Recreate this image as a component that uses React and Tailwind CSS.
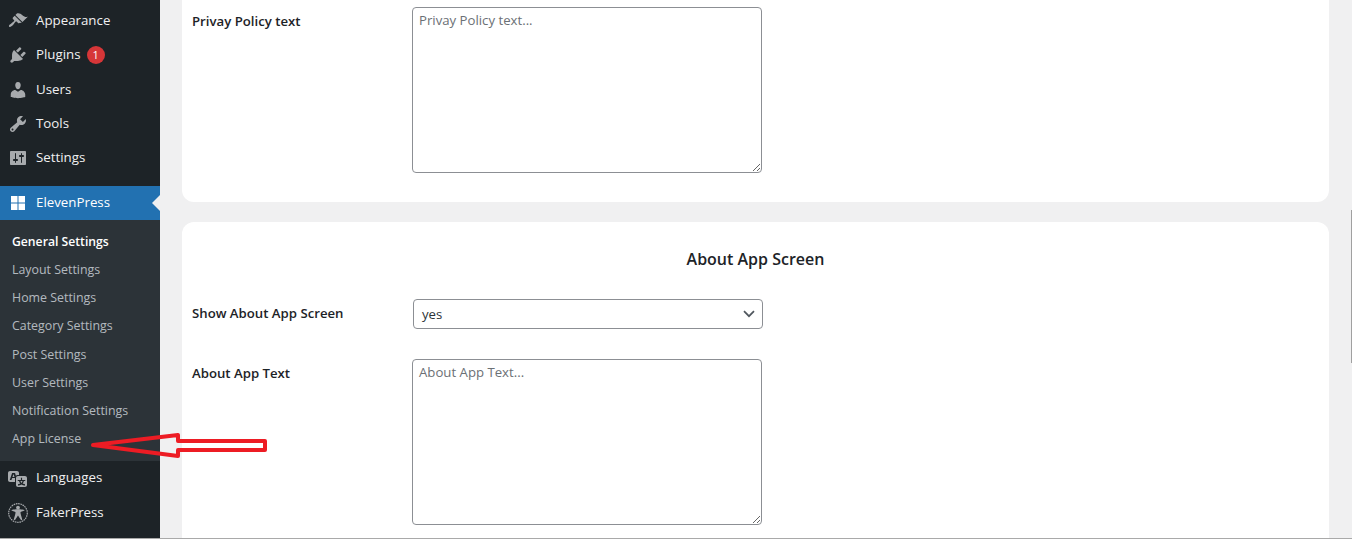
const FONT = "font-['Open_Sans','Noto_Sans',sans-serif]";

const P = {
  appearance: "M14.48 11.06L7.41 3.99l1.5-1.5c.5-.56 2.3-.47 3.51.32 1.21.8 1.43 1.28 2.91 2.1 1.18.64 2.45 1.26 4.45.85zm-.71.71L6.7 4.7 4.93 6.47c-.39.39-.39 1.02 0 1.41l1.06 1.06c.39.39.39 1.03 0 1.42-.6.6-1.43 1.11-2.21 1.69-.35.26-.7.53-1.01.84C1.43 13.23.4 14.85 1.21 15.66c.8.8 2.43-.23 3.78-1.57.31-.31.58-.66.84-1.01.58-.78 1.09-1.61 1.69-2.21.39-.39 1.02-.39 1.41 0l1.06 1.06c.39.39 1.02.39 1.41 0z",
  plugins: "M13.11 4.36L9.87 7.6 8 5.73l3.24-3.24c.35-.34 1.05-.2 1.56.32.52.51.66 1.21.31 1.55zm-8 1.77l.91-1.12 9.01 9.01-1.19.84c-.71.71-2.63 1.16-3.82 1.16H6.14L4.9 17.26c-.59.59-1.54.59-2.12 0-.59-.58-.59-1.53 0-2.12l1.24-1.24v-3.88c0-1.13.4-3.19 1.09-3.89zm7.26 3.97l3.24-3.24c.34-.35 1.04-.2 1.55.31.52.51.66 1.21.31 1.55l-3.24 3.25z",
  users: "M10 9.25c-2.27 0-2.73-3.44-2.73-3.44C7 4.02 7.82 2 9.97 2c2.16 0 2.98 2.02 2.71 3.81 0 0-.41 3.44-2.68 3.44zm0 2.57L12.72 10c2.39 0 4.52 2.33 4.52 4.53v2.49s-3.65 1.13-7.24 1.13c-3.65 0-7.24-1.13-7.24-1.13v-2.49c0-2.25 1.94-4.48 4.47-4.48z",
  tools: "M16.68 9.77c-1.34 1.34-3.3 1.67-4.95.99l-5.41 6.52c-.99.99-2.59.99-3.58 0s-.99-2.59 0-3.57l6.52-5.42c-.68-1.65-.35-3.61.99-4.95 1.28-1.28 3.12-1.62 4.72-1.06l-2.89 2.89 2.82 2.82 2.86-2.87c.53 1.58.18 3.39-1.08 4.65zM3.81 16.21c.4.39 1.04.39 1.43 0 .4-.4.4-1.04 0-1.43-.39-.4-1.03-.4-1.43 0-.39.39-.39 1.03 0 1.43z",
  settings: "M18 16V4c0-.55-.45-1-1-1H3c-.55 0-1 .45-1 1v12c0 .55.45 1 1 1h14c.55 0 1-.45 1-1zM8 11h1c.55 0 1 .45 1 1s-.45 1-1 1H8v1.5c0 .28-.22.5-.5.5s-.5-.22-.5-.5V13H6c-.55 0-1-.45-1-1s.45-1 1-1h1V5.5c0-.28.22-.5.5-.5s.5.22.5.5V11zm5-2h-1c-.55 0-1-.45-1-1s.45-1 1-1h1V5.5c0-.28.22-.5.5-.5s.5.22.5.5V7h1c.55 0 1 .45 1 1s-.45 1-1 1h-1v5.5c0 .28-.22.5-.5.5s-.5-.22-.5-.5V9z",
  languages: "M11 7H9.49c-.63 0-1.25.3-1.59.7L7 5H4.13l-2.39 7h1.69l.74-2H7v4H2c-1.1 0-2-.9-2-2V5c0-1.1.9-2 2-2h7c1.1 0 2 .9 2 2v2zM6.51 9H4.49l1-2.93zM10 8h7c1.1 0 2 .9 2 2v7c0 1.1-.9 2-2 2h-7c-1.1 0-2-.9-2-2v-7c0-1.1.9-2 2-2zm7.25 5v-1.08h-3.17V9.75h-1.16v2.17H9.75V13h1.28c.11.85.56 1.85 1.28 2.62-.87.36-1.89.62-2.31.62-.01.02.22.97.2 1.46.84 0 2.21-.5 3.28-1.15 1.09.65 2.48 1.15 3.34 1.15-.02-.49.2-1.44.2-1.46-.43 0-1.49-.27-2.38-.63.7-.77 1.14-1.77 1.25-2.61h1.36zm-3.81 1.93c-.5-.46-.85-1.13-1.01-1.93h2.09c-.17.8-.51 1.47-1 1.93l-.04.03s-.03-.02-.04-.03z",
};

function Dash({ name }) {
  return (
    <svg viewBox="0 0 20 20" className="w-5 h-5 fill-[#a7aaad]">
      <path d={P[name]} fillRule="evenodd" />
    </svg>
  );
}

function GridIcon() {
  return (
    <svg viewBox="0 0 20 20" className="w-5 h-5 fill-white">
      <rect x="3" y="3" width="6.5" height="6.5" />
      <rect x="10.5" y="3" width="6.5" height="6.5" />
      <rect x="3" y="10.5" width="6.5" height="6.5" />
      <rect x="10.5" y="10.5" width="6.5" height="6.5" />
    </svg>
  );
}

function FakerIcon() {
  return (
    <svg viewBox="0 0 20 20" className="w-5 h-5 fill-[#a7aaad]">
      <circle cx="10" cy="10" r="9.3" fill="none" stroke="#a7aaad" strokeWidth="1.2" strokeDasharray="1.6 0.7" />
      <circle cx="10" cy="4.6" r="1.9" />
      <path d="M3.4 7.2c0-.7 6.6-.9 6.6-.9s6.6.2 6.6.9-4 1.3-4.1 1.9c-.1 1 .2 2.1.5 3.1l1.2 4.1c.2.9-1.1 1.2-1.4.4L10 12.6l-2.8 4.1c-.3.8-1.6.5-1.4-.4L7 12.2c.3-1 .6-2.1.5-3.1-.1-.6-4.1-1.2-4.1-1.9z" />
    </svg>
  );
}

function MenuRow({ icon, label, children }) {
  return (
    <div className="h-[34.25px] flex items-center pl-2 text-[13.3px] text-[#f0f0f1]">
      <span className="w-[28px] shrink-0">{icon}</span>
      <span>{label}</span>
      {children}
    </div>
  );
}

const sub = ["Layout Settings", "Home Settings", "Category Settings", "Post Settings", "User Settings", "Notification Settings", "App License"];

function Sidebar() {
  return (
    <aside className="w-40 shrink-0 bg-[#1d2327] pt-[4px]">
      <MenuRow icon={<Dash name="appearance" />} label="Appearance" />
      <MenuRow icon={<Dash name="plugins" />} label="Plugins">
        <span className="ml-[6px] w-[18px] h-[18px] rounded-full bg-[#d63638] text-white text-[11px] flex items-center justify-center">1</span>
      </MenuRow>
      <MenuRow icon={<Dash name="users" />} label="Users" />
      <MenuRow icon={<Dash name="tools" />} label="Tools" />
      <MenuRow icon={<Dash name="settings" />} label="Settings" />
      <div className="relative mt-[11px] h-[34px] bg-[#2271b1] flex items-center pl-2 text-[13.3px] text-white">
        <span className="w-[28px] shrink-0"><GridIcon /></span>
        <span>ElevenPress</span>
        <span className="absolute right-0 top-[9px] border-y-[8px] border-y-transparent border-r-[8px] border-r-[#f0f0f1]" />
      </div>
      <div className="bg-[#2c3338] pt-[8px] pb-[8px]">
        <div className="h-[28.14px] flex items-center pl-3 text-[12.2px] font-semibold text-white">General Settings</div>
        {sub.map((s) => (
          <div key={s} className="h-[28.14px] flex items-center pl-3 text-[12.4px] text-[#f0f6fc]/70">{s}</div>
        ))}
      </div>
      <MenuRow icon={<Dash name="languages" />} label="Languages" />
      <MenuRow icon={<FakerIcon />} label="FakerPress" />
    </aside>
  );
}

function TextBox({ placeholder }) {
  return (
    <textarea
      placeholder={placeholder}
      className={`${FONT} w-[350px] h-[166px] block border border-[#8c8f94] rounded-[4px] px-[6px] py-[2px] text-[13.2px] leading-[20px] text-[#2c3338] placeholder:text-[#6b7075] outline-none bg-white`}
    />
  );
}

function Label({ children }) {
  return <div className="w-[220px] ml-[10px] shrink-0 pt-[4px] text-[13.2px] leading-[20px] font-semibold text-[#1d2327]">{children}</div>;
}

function Main() {
  return (
    <main className="flex-1 min-w-0 bg-[#f0f0f1] pl-[22px] pr-[23px] overflow-hidden">
      <section className="bg-white rounded-b-xl pt-[7px] pb-[29px] flex">
        <Label>Privay Policy text</Label>
        <TextBox placeholder="Privay Policy text..." />
      </section>
      <section className="bg-white rounded-t-xl mt-5 pt-[26px] pb-10">
        <h2 className="text-center text-[16px] leading-[22px] font-semibold text-[#1d2327]">About App Screen</h2>
        <div className="flex mt-[29px]">
          <Label>Show About App Screen</Label>
          <div className="ml-px w-[350px] h-[30px] border border-[#8c8f94] rounded-[4px] flex items-center justify-between pl-2 pr-[7px] text-[13.2px] text-[#2c3338]">
            <span className="translate-y-px">yes</span>
            <svg viewBox="0 0 12 8" className="w-3 h-2 fill-none stroke-[#50575e] stroke-[1.7]">
              <path d="M1 1.2l5 5 5-5" />
            </svg>
          </div>
        </div>
        <div className="flex mt-[30px]">
          <Label>About App Text</Label>
          <TextBox placeholder="About App Text..." />
        </div>
      </section>
    </main>
  );
}

export default function App() {
  return (
    <div className={`${FONT} relative w-[1352px] h-[541px] overflow-hidden bg-white`}>
      <div className="flex h-[538px]">
        <Sidebar />
        <Main />
      </div>
      <div className="h-px bg-[#a9a9a9]" />
      <div className="absolute right-0 top-[210px] w-px h-[153px] bg-[#a0a0a0]" />
      <svg className="absolute left-0 top-0 w-[300px] h-[480px] pointer-events-none" viewBox="0 0 300 480">
        <path d="M93 445L178 435V441H265V450H178V456Z" fill="none" stroke="#ed1c24" strokeWidth="4" strokeLinejoin="round" />
      </svg>
    </div>
  );
}
